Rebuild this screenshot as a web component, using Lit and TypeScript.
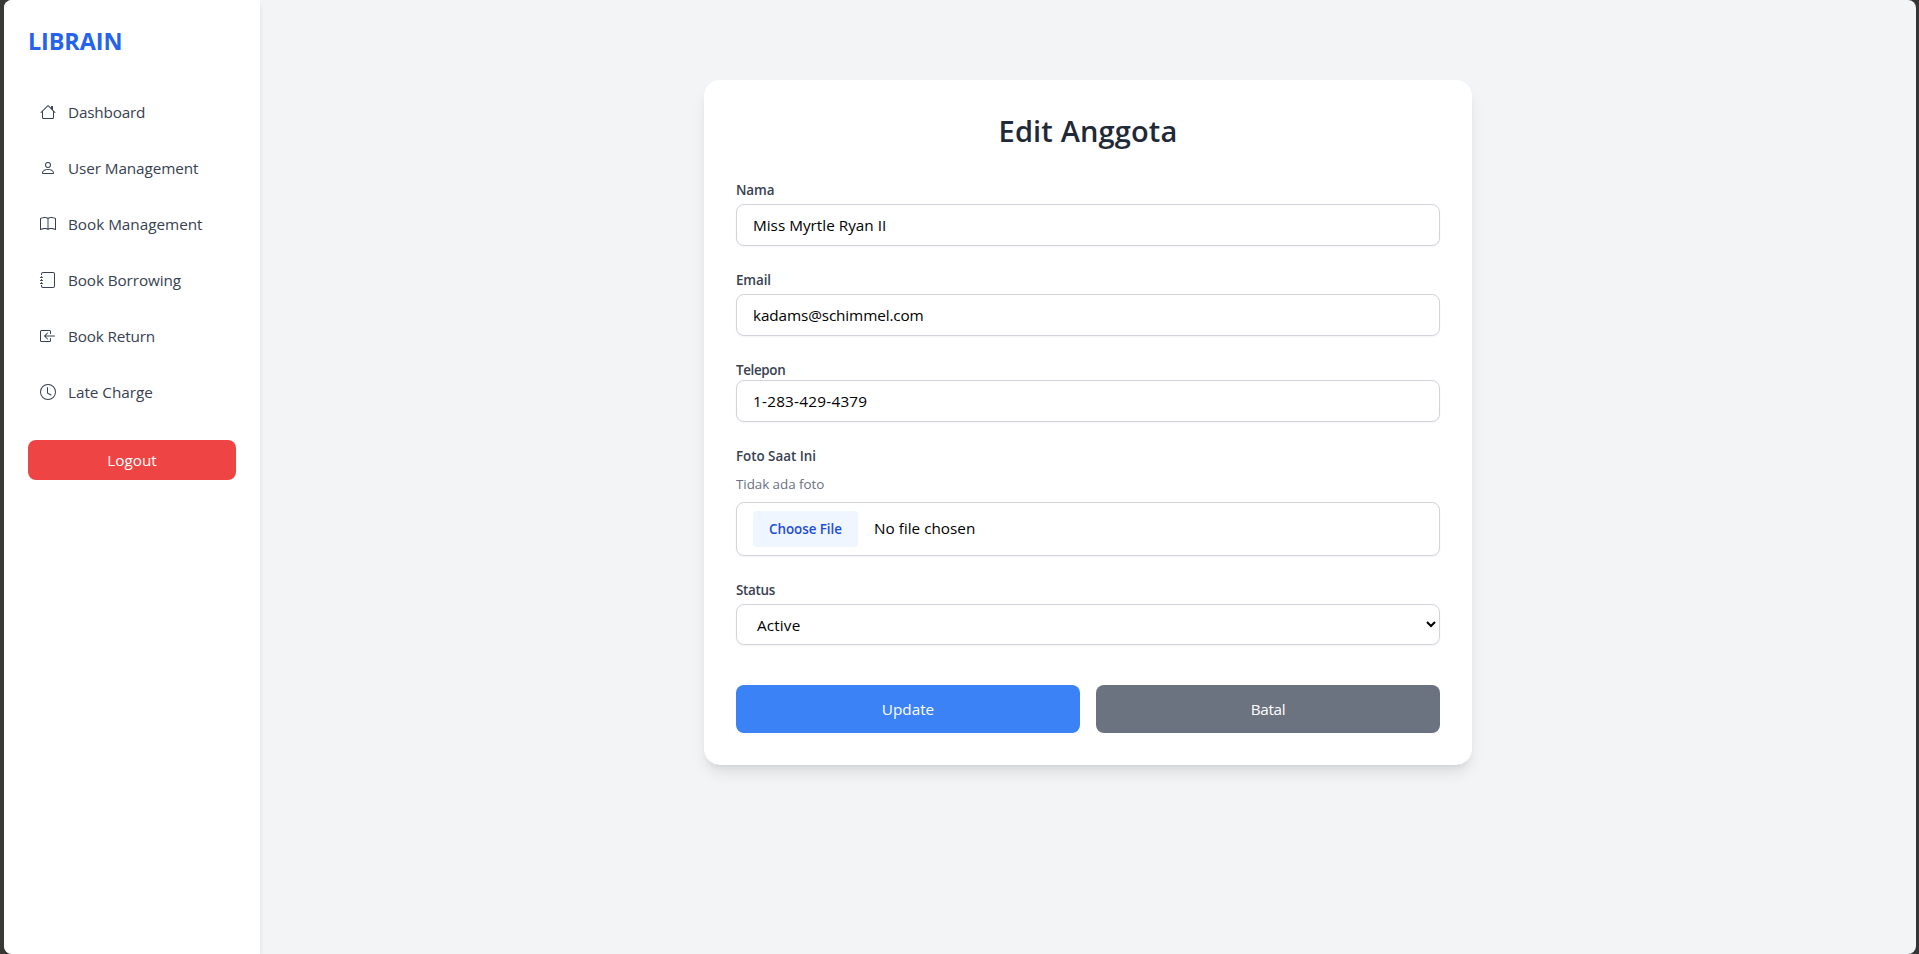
import { LitElement, html, css, svg } from "lit";
import { customElement } from "lit/decorators.js";

const icons = {
  house: svg`<path d="M8.707 1.5a1 1 0 0 0-1.414 0L.646 8.146a.5.5 0 0 0 .708.708L2 8.207V13.5A1.5 1.5 0 0 0 3.5 15h9a1.5 1.5 0 0 0 1.5-1.5V8.207l.646.647a.5.5 0 0 0 .708-.708L13 5.793V2.5a.5.5 0 0 0-.5-.5h-1a.5.5 0 0 0-.5.5v1.293zM13 7.207V13.5a.5.5 0 0 1-.5.5h-9a.5.5 0 0 1-.5-.5V7.207l5-5z"/>`,
  person: svg`<path d="M8 8a3 3 0 1 0 0-6 3 3 0 0 0 0 6m2-3a2 2 0 1 1-4 0 2 2 0 0 1 4 0m4 8c0 1-1 1-1 1H3s-1 0-1-1 1-4 6-4 6 3 6 4m-1-.004c-.001-.246-.154-.986-.832-1.664C11.516 10.68 10.289 10 8 10s-3.516.68-4.168 1.332c-.678.678-.83 1.418-.832 1.664z"/>`,
  book: svg`<path d="M1 2.828c.885-.37 2.154-.769 3.388-.893 1.33-.134 2.458.063 3.112.752v9.746c-.935-.53-2.12-.603-3.213-.493-1.18.12-2.37.461-3.287.811zm7.5-.141c.654-.689 1.782-.886 3.112-.752 1.234.124 2.503.523 3.388.893v9.923c-.918-.35-2.107-.692-3.287-.81-1.094-.111-2.278-.039-3.213.492zM8 1.783C7.015.936 5.587.81 4.287.94c-1.514.153-3.042.672-3.994 1.105A.5.5 0 0 0 0 2.5v11a.5.5 0 0 0 .707.455c.882-.4 2.303-.881 3.68-1.02 1.409-.142 2.59.087 3.223.877a.5.5 0 0 0 .78 0c.633-.79 1.814-1.019 3.222-.877 1.378.139 2.8.62 3.681 1.02A.5.5 0 0 0 16 13.5v-11a.5.5 0 0 0-.293-.455c-.952-.433-2.48-.952-3.994-1.105C10.413.809 8.985.936 8 1.783"/>`,
  journal: svg`<path d="M3 0h10a2 2 0 0 1 2 2v12a2 2 0 0 1-2 2H3a2 2 0 0 1-2-2v-1h1v1a1 1 0 0 0 1 1h10a1 1 0 0 0 1-1V2a1 1 0 0 0-1-1H3a1 1 0 0 0-1 1v1H1V2a2 2 0 0 1 2-2"/><path d="M1 5v-.5a.5.5 0 0 1 1 0V5h.5a.5.5 0 0 1 0 1h-2a.5.5 0 0 1 0-1zm0 3v-.5a.5.5 0 0 1 1 0V8h.5a.5.5 0 0 1 0 1h-2a.5.5 0 0 1 0-1zm0 3v-.5a.5.5 0 0 1 1 0v.5h.5a.5.5 0 0 1 0 1h-2a.5.5 0 0 1 0-1z"/>`,
  arrowIn: svg`<path d="M10 3.5a.5.5 0 0 0-.5-.5h-8a.5.5 0 0 0-.5.5v9a.5.5 0 0 0 .5.5h8a.5.5 0 0 0 .5-.5v-2a.5.5 0 0 1 1 0v2A1.5 1.5 0 0 1 9.5 14h-8A1.5 1.5 0 0 1 0 12.5v-9A1.5 1.5 0 0 1 1.5 2h8A1.5 1.5 0 0 1 11 3.5v2a.5.5 0 0 1-1 0z"/><path d="M4.146 8.354a.5.5 0 0 1 0-.708l3-3a.5.5 0 1 1 .708.708L5.707 7.5H14.5a.5.5 0 0 1 0 1H5.707l2.147 2.146a.5.5 0 0 1-.708.708z"/>`,
  clock: svg`<path d="M8 3.5a.5.5 0 0 0-1 0V9a.5.5 0 0 0 .252.434l3.5 2a.5.5 0 0 0 .496-.868L8 8.71z"/><path d="M8 16A8 8 0 1 0 8 0a8 8 0 0 0 0 16m7-8A7 7 0 1 1 1 8a7 7 0 0 1 14 0"/>`,
};

const links = [
  { label: "Dashboard", icon: icons.house, track: "t-dashboard" },
  { label: "User Management", icon: icons.person, track: "t-user" },
  { label: "Book Management", icon: icons.book, track: "t-book" },
  { label: "Book Borrowing", icon: icons.journal, track: "t-borrow" },
  { label: "Book Return", icon: icons.arrowIn, track: "t-return" },
  { label: "Late Charge", icon: icons.clock, track: "t-late" },
];

@customElement("side-nav")
class SideNav extends LitElement {
  static styles = css`
    :host {
      display: flex;
      flex-direction: column;
      box-sizing: border-box;
      width: 256px;
      padding: 24px;
      background: #fff;
      box-shadow: 0 4px 6px -1px rgba(0, 0, 0, 0.1), 0 2px 4px -2px rgba(0, 0, 0, 0.1);
      z-index: 1;
    }
    .brand {
      margin: 0 0 30px;
      font-size: 23.4px;
      font-weight: 700;
      line-height: 34px;
      letter-spacing: -0.1px;
      color: #2563eb;
    }
    nav {
      display: flex;
      flex-direction: column;
      gap: 8px;
      line-height: 24px;
    }
    a {
      display: flex;
      align-items: center;
      gap: 12px;
      padding: 12px;
      height: 24px;
      color: #374151;
      text-decoration: none;
    }
    svg { width: 16px; height: 16px; fill: currentColor; }
    .t-dashboard { letter-spacing: -0.2px; }
    .t-user { letter-spacing: -0.1px; }
    .t-book { letter-spacing: -0.03px; }
    .t-borrow { letter-spacing: -0.11px; }
    .t-return { letter-spacing: -0.16px; }
    .t-late { letter-spacing: -0.03px; }
    button {
      margin-top: 24px;
      height: 40px;
      border: 0;
      border-radius: 8px;
      background: #ef4444;
      color: #fff;
      font: inherit;
      line-height: 24px;
    }
  `;
  render() {
    return html`
      <h1 class="brand">LIBRAIN</h1>
      <nav>
        ${links.map((l) => html`<a href="#"><svg viewBox="0 0 16 16">${l.icon}</svg><span class=${l.track}>${l.label}</span></a>`)}
      </nav>
      <button type="button">Logout</button>
    `;
  }
}

@customElement("member-form")
class MemberForm extends LitElement {
  static styles = css`
    :host {
      display: block;
      box-sizing: border-box;
      width: 768px;
      padding: 32px;
      border-radius: 16px;
      background: #fff;
      box-shadow: 0 10px 15px -3px rgba(0, 0, 0, 0.1), 0 4px 6px -4px rgba(0, 0, 0, 0.1);
    }
    h2 {
      margin: 0 0 30px;
      font-size: 29px;
      font-weight: 600;
      line-height: 38px;
      letter-spacing: 0.15px;
      text-align: center;
      color: #1f2937;
    }
    form { display: flex; flex-direction: column; gap: 24px; }
    .field { display: flex; flex-direction: column; gap: 4px; }
    .tight { gap: 0; }
    label {
      font-size: 13.4px;
      font-weight: 600;
      line-height: 20px;
      letter-spacing: -0.12px;
      color: #374151;
    }
    .t-telepon { letter-spacing: -0.35px; }
    .t-foto { letter-spacing: -0.03px; }
    .t-status { letter-spacing: -0.32px; }
    .note {
      margin: 4px 0;
      font-size: 13.4px;
      line-height: 20px;
      letter-spacing: -0.05px;
      color: #6b7280;
    }
    input, select {
      box-sizing: border-box;
      width: 100%;
      height: 42px;
      margin: 0;
      padding: 8px 16px;
      border: 1px solid #d1d5db;
      border-radius: 8px;
      background: #fff;
      color: #000;
      font: inherit;
      line-height: 24px;
      box-shadow: 0 1px 2px rgba(0, 0, 0, 0.05);
    }
    .v-name { letter-spacing: 0; }
    .v-email { letter-spacing: -0.12px; }
    .v-phone { letter-spacing: 0.24px; }
    input[type="file"] { height: 54px; }
    input::file-selector-button {
      box-sizing: border-box;
      width: 105px;
      height: 36px;
      margin: 0 16px 0 0;
      padding: 8px 0;
      border: 0;
      border-radius: 4px;
      background: #eff6ff;
      color: #1d4ed8;
      font: inherit;
      font-size: 13.4px;
      font-weight: 600;
      line-height: 20px;
      letter-spacing: -0.05px;
    }
    select { height: 41px; letter-spacing: 0.14px; }
    .actions { display: grid; grid-template-columns: 1fr 1fr; gap: 16px; padding-top: 16px; }
    button {
      height: 48px;
      border: 0;
      border-radius: 8px;
      background: #3b82f6;
      color: #fff;
      font: inherit;
      line-height: 24px;
    }
    .cancel { background: #6b7280; letter-spacing: -0.3px; }
  `;
  render() {
    return html`
      <h2>Edit Anggota</h2>
      <form>
        <div class="field">
          <label for="name">Nama</label>
          <input id="name" class="v-name" .value=${"Miss Myrtle Ryan II"} />
        </div>
        <div class="field">
          <label for="email">Email</label>
          <input id="email" class="v-email" .value=${"kadams@schimmel.com"} />
        </div>
        <div class="field tight">
          <label for="phone" class="t-telepon">Telepon</label>
          <input id="phone" class="v-phone" .value=${"1-283-429-4379"} />
        </div>
        <div class="field">
          <label for="photo" class="t-foto">Foto Saat Ini</label>
          <p class="note">Tidak ada foto</p>
          <input id="photo" type="file" />
        </div>
        <div class="field">
          <label for="status" class="t-status">Status</label>
          <select id="status"><option>Active</option></select>
        </div>
        <div class="actions">
          <button type="button">Update</button>
          <button type="button" class="cancel">Batal</button>
        </div>
      </form>
    `;
  }
}

@customElement("app-root")
class AppRoot extends LitElement {
  static styles = css`
    :host {
      display: block;
      box-sizing: border-box;
      height: 100vh;
      padding: 0 3px 0 4px;
      background: linear-gradient(90deg, #3a3835 0 50%, #343434 50%);
      font: 15.3px "Segoe UI", "Open Sans", "Noto Sans", sans-serif;
    }
    .window {
      display: flex;
      height: 100%;
      border-radius: 8px;
      overflow: hidden;
      background: #f3f4f6;
    }
    main {
      flex: 1;
      display: flex;
      justify-content: center;
      align-items: flex-start;
      padding-top: 80px;
    }
  `;
  render() {
    return html`
      <div class="window">
        <side-nav></side-nav>
        <main><member-form></member-form></main>
      </div>
    `;
  }
}
